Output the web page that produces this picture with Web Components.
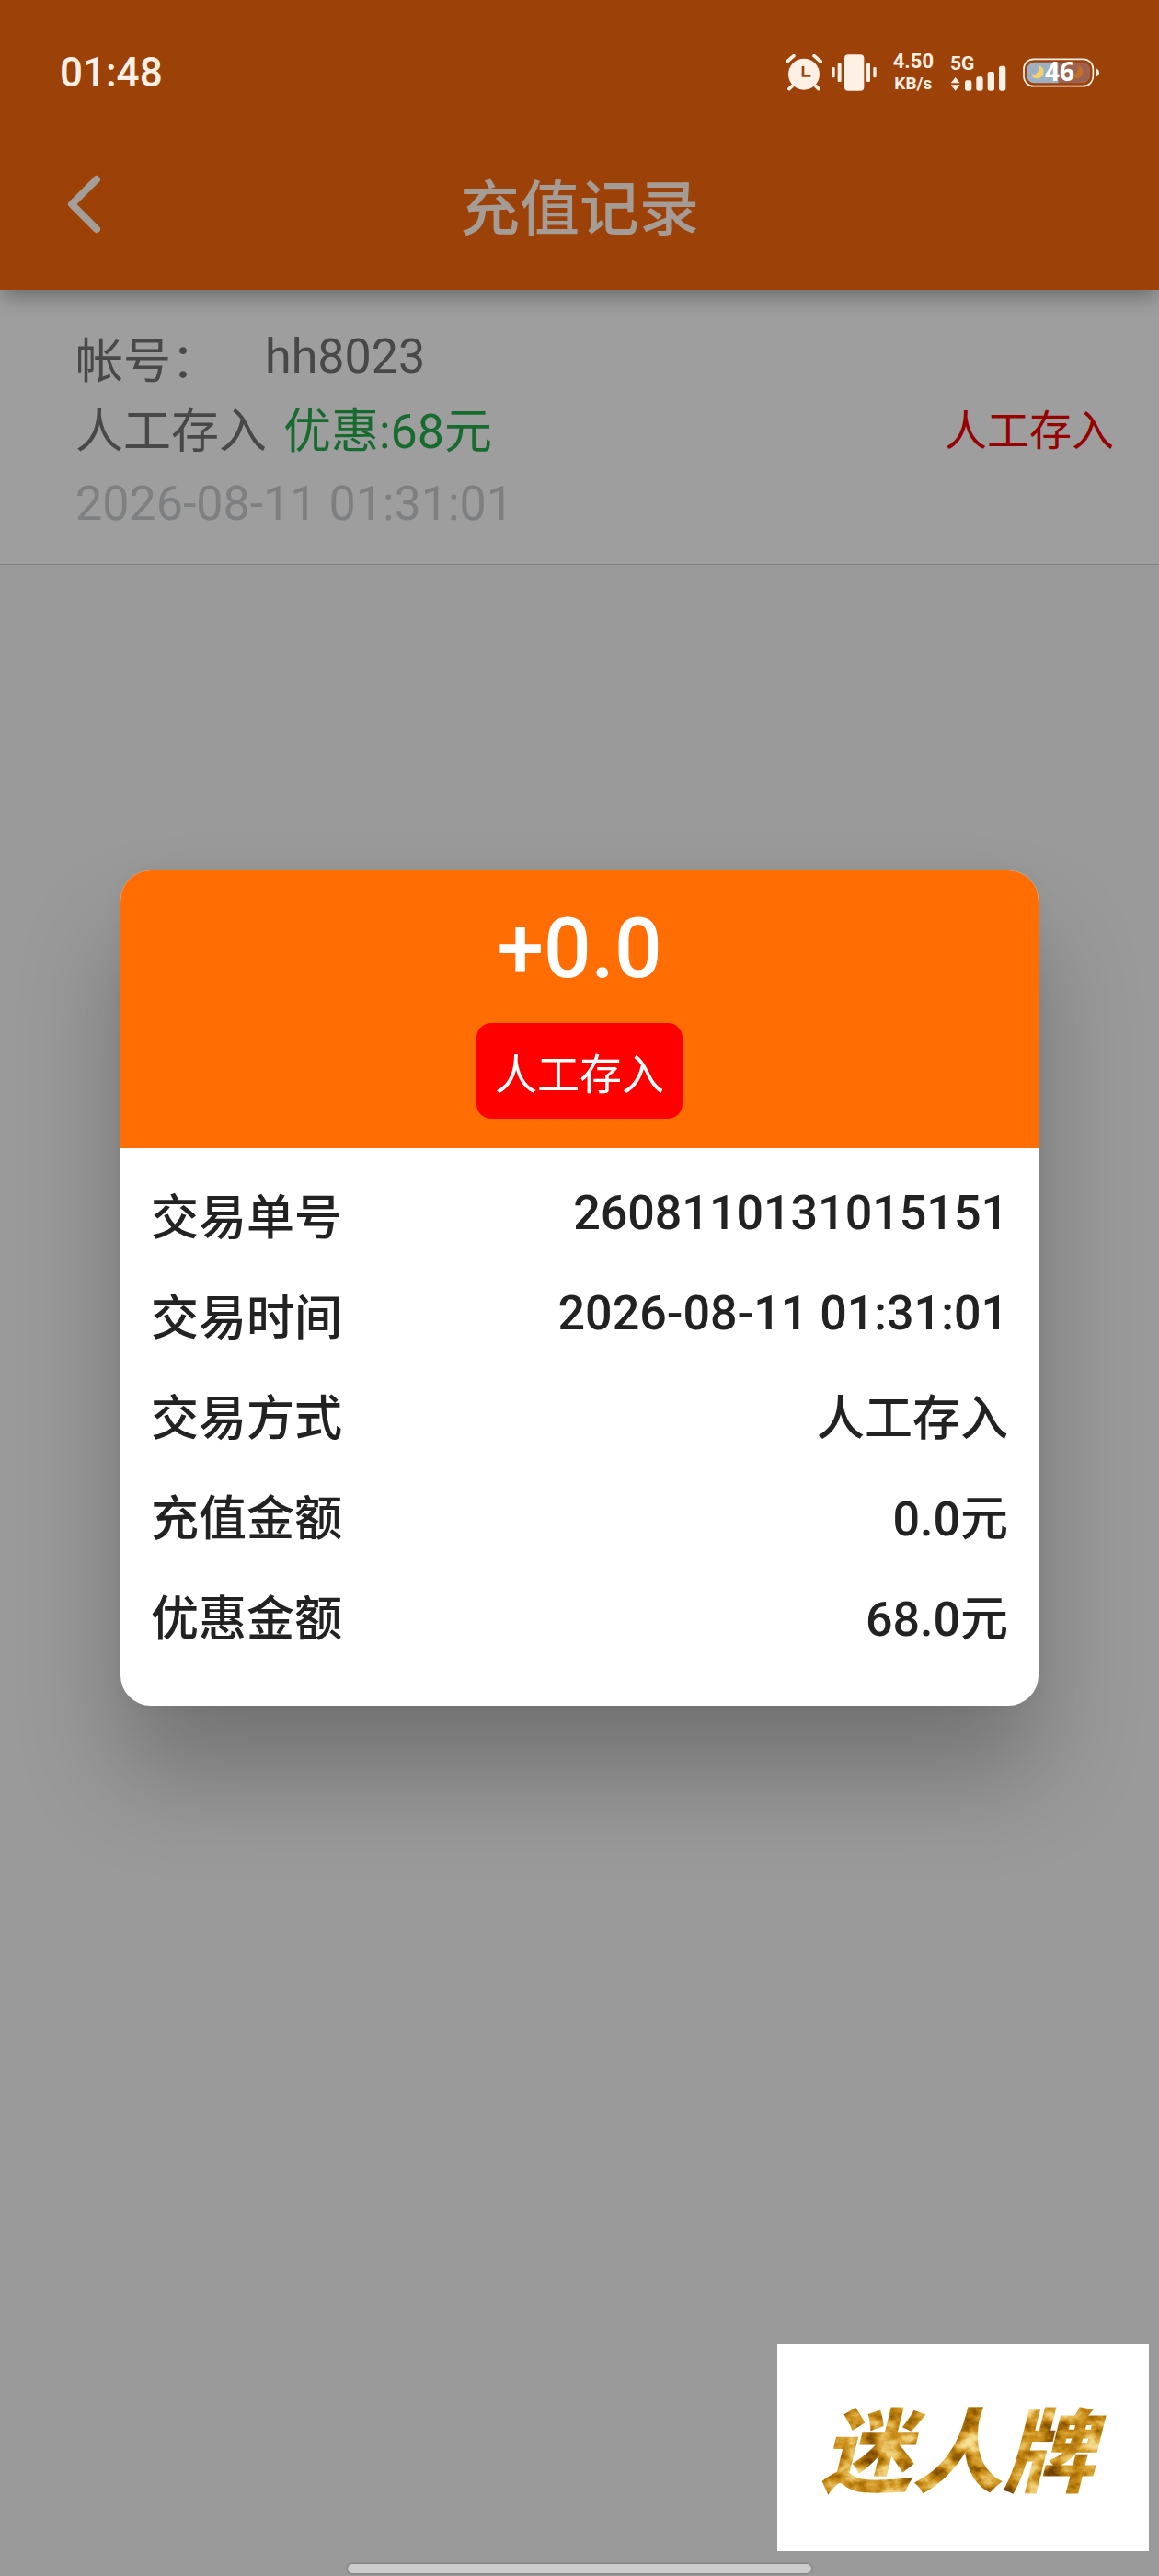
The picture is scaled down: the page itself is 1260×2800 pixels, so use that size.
<!DOCTYPE html>
<html lang="zh-CN">
<head>
<meta charset="UTF-8">
<meta name="viewport" content="width=device-width, initial-scale=1">
<title>充值记录</title>
<style>
	html, body {
		margin: 0;
		min-height: 100vh;
		background: #9a9a9a;
		font-family: Roboto, "Noto Sans CJK SC", sans-serif;
	}
</style>
</head>
<body>
	<app-header>
		<status-bar slot="status" time="01:48"></status-bar>
		充值记录
	</app-header>
	<main>
		<record-item>
			<span slot="label">帐号：</span>
			<span slot="account">hh8023</span>
			<span slot="type">人工存入</span>
			<span slot="bonus">优惠:68元</span>
			<span slot="time">2026-08-11 01:31:01</span>
			<span slot="status">人工存入</span>
		</record-item>
	</main>
	<record-dialog>
		<span slot="amount">+0.0</span>
		<span slot="badge">人工存入</span>
		<detail-row label="交易单号" plain>2608110131015151</detail-row>
		<detail-row label="交易时间" plain>2026-08-11 01:31:01</detail-row>
		<detail-row label="交易方式">人工存入</detail-row>
		<detail-row label="充值金额">0.0元</detail-row>
		<detail-row label="优惠金额">68.0元</detail-row>
	</record-dialog>
	<brand-float></brand-float>
	<home-indicator></home-indicator>

	<script>
		const define = (name, html, ready) => {
			customElements.define(name, class extends HTMLElement {
				constructor() {
					super();
					this.shadow = this.attachShadow({mode: 'open'});
					const template = document.createElement('template');
					template.innerHTML = html;
					this.shadow.append(template.content);
				}
				connectedCallback() {
					if (ready) ready(this);
				}
			});
		};

		define('status-bar', `
			<style>
				:host {
					display: flex;
					align-items: center;
					justify-content: space-between;
					box-sizing: border-box;
					height: 131px;
					padding: 26px 64px 0 65px;
					color: #fff0e6;
				}
				.time { font-size: 44px; font-weight: 500; }
				.icons { display: flex; align-items: center; gap: 18px; font-weight: 700; }
				.alerts { display: flex; gap: 10px; }
				svg { display: block; }
				.speed { display: flex; flex-direction: column; align-items: center; font-size: 22px; line-height: 24px; }
				.speed small { font-size: 19px; line-height: 24px; }
				.signal { font-size: 21px; line-height: 20px; }
				.battery { position: relative; }
				.battery span {
					position: absolute;
					inset: 0 4px 0 0;
					text-align: center;
					font: 700 28px/28px "Open Sans", sans-serif;
					color: #fff;
				}
			</style>
			<span class="time"></span>
			<div class="icons">
				<div class="alerts">
					<svg width="40" height="40" viewBox="0 0 120 120" fill="currentColor" aria-label="闹钟">
						<circle cx="60" cy="65" r="51"/>
						<path d="M5 24L27 5M115 24L93 5" stroke="currentColor" stroke-width="11" stroke-linecap="round"/>
						<path d="M22 103L12 113M98 103L108 113" stroke="currentColor" stroke-width="11" stroke-linecap="round"/>
						<path d="M57 39V70H82" fill="none" stroke="#9c4108" stroke-width="8"/>
					</svg>
					<svg width="49" height="40" viewBox="0 0 147 120" fill="currentColor" aria-label="振动">
						<rect x="42" y="1" width="64" height="118" rx="12"/>
						<rect x="20" y="29" width="12" height="61" rx="4"/>
						<rect x="114" y="29" width="12" height="61" rx="4"/>
						<rect x="1" y="42" width="10" height="34" rx="4"/>
						<rect x="136" y="42" width="10" height="34" rx="4"/>
					</svg>
				</div>
				<div class="speed"><span>4.50</span><small>KB/s</small></div>
				<div class="signal">
					<span>5G</span>
					<svg width="61" height="20" viewBox="0 -22 183 60" overflow="visible" fill="currentColor" aria-label="信号">
						<path d="M2 12L17 -7L32 12zM2 18L17 37L32 18z"/>
						<rect x="48" y="3" width="22" height="34" rx="7"/>
						<rect x="85" y="-9" width="22" height="46" rx="7"/>
						<rect x="122" y="-25" width="22" height="62" rx="7"/>
						<rect x="159" y="-44" width="22" height="81" rx="7"/>
					</svg>
				</div>
				<div class="battery">
					<svg width="84" height="32" viewBox="0 0 252 96" aria-label="电量">
						<defs><clipPath id="cell"><rect x="13" y="14" width="206" height="68" rx="24"/></clipPath></defs>
						<rect x="3" y="4" width="226" height="88" rx="32" fill="none" stroke="#fff0e6" stroke-width="5"/>
						<g clip-path="url(#cell)">
							<rect x="10" y="10" width="106" height="80" fill="#9fb0c2"/>
							<rect x="116" y="10" width="110" height="80" fill="#9d6350"/>
							<path d="M52 24A22 22 0 1 1 28 58A27 27 0 0 0 52 24z" fill="#f6d26b"/>
							<path d="M180 24A22 22 0 1 1 156 58A27 27 0 0 0 180 24z" fill="#c1702c"/>
						</g>
						<path d="M238 34Q249 38 249 48Q249 58 238 62z" fill="#fff0e6"/>
					</svg>
					<span>46</span>
				</div>
			</div>
		`, (el) => {
			el.shadow.querySelector('.time').textContent = el.getAttribute('time');
		});

		define('app-header', `
			<style>
				:host {
					display: block;
					position: relative;
					z-index: 1;
					padding-bottom: 2px;
					background: #9c4108;
					box-shadow: 0 10px 20px -2px rgba(0, 0, 0, .3);
				}
				.bar {
					display: grid;
					grid-template-columns: 182px 1fr 182px;
					align-items: center;
					height: 182px;
				}
				button {
					display: grid;
					place-items: center;
					height: 182px;
					padding: 0;
					border: 0;
					background: none;
					color: #a59d98;
				}
				h1 {
					margin: 0;
					font-size: 65px;
					font-weight: 500;
					text-align: center;
					color: #a59d95;
				}
			</style>
			<slot name="status"></slot>
			<div class="bar">
				<button type="button" aria-label="返回">
					<svg width="36" height="64" viewBox="0 0 36 64" fill="none" stroke="currentColor" stroke-width="8" stroke-linecap="round" stroke-linejoin="round">
						<path d="M32 5L5 32L32 59"/>
					</svg>
				</button>
				<h1><slot></slot></h1>
			</div>
		`);

		define('record-item', `
			<style>
				:host {
					display: flex;
					align-items: center;
					justify-content: space-between;
					padding: 0 49px 0 82px;
					border-bottom: 1px solid #828282;
					background: #9e9e9e;
					color: #484848;
					font-size: 52px;
				}
				.info { display: grid; gap: 4px; padding: 43px 0 27px; line-height: 72px; }
				.line { display: flex; align-items: flex-start; }
				.account { margin-left: 50px; line-height: 60px; }
				.bonus { margin-left: 18px; color: #176b2e; }
				.time { color: #7d7f81; line-height: 76px; }
				.status { font-size: 46px; color: #960000; }
			</style>
			<div class="info">
				<div class="line"><slot name="label"></slot><div class="account"><slot name="account"></slot></div></div>
				<div class="line"><slot name="type"></slot><div class="bonus"><slot name="bonus"></slot></div></div>
				<div class="time"><slot name="time"></slot></div>
			</div>
			<div class="status"><slot name="status"></slot></div>
		`);

		define('record-dialog', `
			<style>
				:host {
					position: fixed;
					inset: 0;
					z-index: 2;
					display: flex;
					align-items: center;
					padding: 0 131px;
				}
				section {
					flex: 1;
					overflow: hidden;
					border-radius: 33px;
					background: #fff;
					box-shadow: 0 75px 110px rgba(0, 0, 0, .25), 0 0 30px rgba(0, 0, 0, .05);
				}
				header {
					display: flex;
					flex-direction: column;
					align-items: center;
					gap: 28px;
					padding: 32px 0;
					background: #ff6d03;
					color: #fff;
				}
				.amount { font-size: 91px; font-weight: 500; line-height: 106px; }
				.badge { padding: 19px 20px; border-radius: 16px; background: #f00; font-size: 46px; }
				.rows { padding: 22px 33px 39px; }
			</style>
			<section role="dialog" aria-label="交易详情">
				<header>
					<div class="amount"><slot name="amount"></slot></div>
					<div class="badge"><slot name="badge"></slot></div>
				</header>
				<div class="rows"><slot></slot></div>
			</section>
		`);

		define('detail-row', `
			<style>
				:host {
					display: flex;
					align-items: flex-start;
					justify-content: space-between;
					padding: 18px 0;
					font-size: 52px;
					font-weight: 500;
					line-height: 73px;
					color: #222;
				}
				/* digits only: sits on the shorter latin line */
				:host([plain]) .value { line-height: 62px; }
			</style>
			<span class="label"></span>
			<span class="value"><slot></slot></span>
		`, (el) => {
			el.shadow.querySelector('.label').textContent = el.getAttribute('label');
		});

		define('brand-float', `
			<style>
				:host {
					position: fixed;
					right: 11px;
					bottom: 27px;
					z-index: 3;
					background: #fff;
				}
				svg { display: block; }
				text { font: italic 900 99px "Noto Sans CJK SC", sans-serif; }
			</style>
			<svg width="404" height="225" viewBox="0 0 404 225">
				<defs>
					<filter id="gold" x="0" y="0" width="100%" height="100%" color-interpolation-filters="sRGB">
						<feTurbulence type="fractalNoise" baseFrequency=".045 .06" numOctaves="5" seed="8"/>
						<feColorMatrix values="1 0 0 0 0  1 0 0 0 0  1 0 0 0 0  0 0 0 0 1"/>
						<feComponentTransfer>
							<feFuncR type="table" tableValues=".4 .45 .58 .75 .85 .93 .97 .98"/>
							<feFuncG type="table" tableValues=".22 .26 .37 .51 .64 .8 .88 .9"/>
							<feFuncB type="table" tableValues="0 .01 .02 .06 .2 .45 .58 .6"/>
						</feComponentTransfer>
						<feComposite in2="SourceAlpha" operator="in"/>
					</filter>
				</defs>
				<text x="196" y="153" text-anchor="middle" filter="url(#gold)">迷人牌</text>
			</svg>
		`);

		define('home-indicator', `
			<style>
				:host {
					position: fixed;
					left: 30%;
					right: 30%;
					bottom: 3px;
					z-index: 3;
					height: 10px;
					border-radius: 5px;
					background: #ccc;
					box-shadow: 0 0 3px rgba(0, 0, 0, .4);
				}
			</style>
		`);
	</script>
</body>
</html>
